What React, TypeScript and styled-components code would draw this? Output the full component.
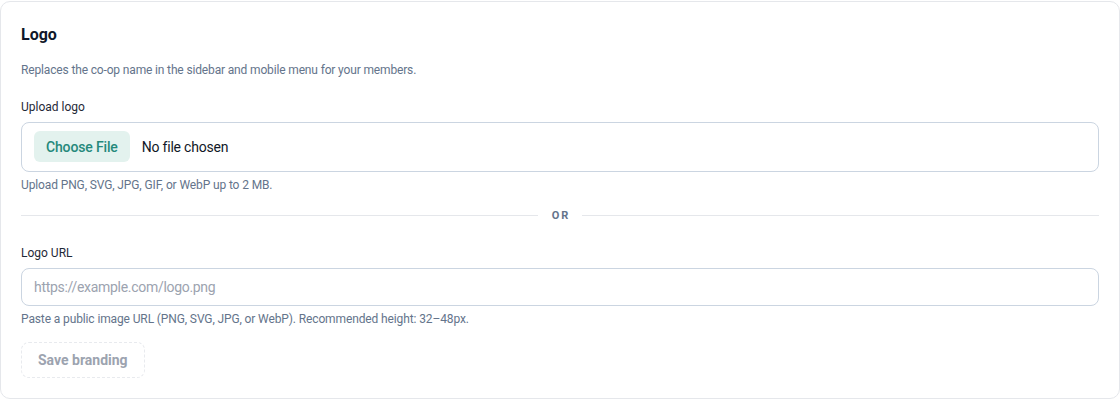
import React from "react";
import styled, { createGlobalStyle } from "styled-components";

const FONT = `Roboto, "Noto Sans", sans-serif`;

const Global = createGlobalStyle`
  * { box-sizing: border-box; }
  html, body { margin: 0; padding: 0; background: #ffffff; }
  body { font-family: ${FONT}; -webkit-font-smoothing: antialiased; }
`;

const Page = styled.div`
  padding-top: 1px;
`;

const Card = styled.section`
  width: 1120px;
  height: 398px;
  background: #ffffff;
  border: 1px solid #e5e7eb;
  border-radius: 10px;
  padding: 20px;
  display: flex;
  flex-direction: column;
`;

const Title = styled.h2`
  margin: 1px 0 0;
  font-size: 16px;
  line-height: 24px;
  font-weight: 700;
  color: #0f172a;
`;

const Description = styled.p`
  margin: 15px 0 0;
  font-size: 12px;
  line-height: 16px;
  letter-spacing: -0.15px;
  color: #64748b;
`;

const Field = styled.div<{ $top: number }>`
  margin-top: ${(p) => p.$top}px;
  display: flex;
  flex-direction: column;
`;

const Label = styled.label`
  font-size: 12px;
  line-height: 16px;
  font-weight: 400;
  color: #1f2937;
  margin-bottom: 7px;
`;

const FileInput = styled.input`
  width: 100%;
  height: 50px;
  border: 1px solid #cbd5e1;
  border-radius: 8px;
  padding: 0 12px;
  font-family: ${FONT};
  font-size: 14px;
  letter-spacing: -0.2px;
  color: #111827;
  background: #ffffff;

  &::file-selector-button {
    font-family: ${FONT};
    font-size: 14px;
    font-weight: 500;
    letter-spacing: -0.15px;
    color: #25897b;
    background: #e3f2ee;
    border: none;
    border-radius: 6px;
    height: 31px;
    padding: 0 12px;
    margin: 8px 12px 0 0;
    cursor: pointer;
  }
`;

const TextInput = styled.input`
  width: 100%;
  height: 38px;
  border: 1px solid #cbd5e1;
  border-radius: 8px;
  padding: 0 12px;
  font-family: ${FONT};
  font-size: 14px;
  letter-spacing: -0.3px;
  color: #111827;
  background: #ffffff;
  outline: none;

  &::placeholder {
    color: #9ca3af;
  }
`;

const Hint = styled.p`
  margin: 5px 0 0;
  font-size: 12px;
  line-height: 16px;
  letter-spacing: -0.12px;
  color: #64748b;
`;

const Divider = styled.div`
  margin-top: 15px;
  height: 16px;
  display: flex;
  align-items: center;
  gap: 12px;

  &::before,
  &::after {
    content: "";
    flex: 1;
    height: 1px;
    background: #e5e7eb;
  }
`;

const DividerText = styled.span`
  font-size: 11px;
  font-weight: 700;
  letter-spacing: 2px;
  color: #64748b;
  padding-left: 2px;
`;

const SaveButton = styled.button`
  margin-top: 15px;
  align-self: flex-start;
  height: 37px;
  padding: 0 16px;
  border: 1px dashed #e8eaee;
  border-radius: 8px;
  background: #ffffff;
  font-family: ${FONT};
  font-size: 14px;
  font-weight: 700;
  color: #9ca3af;
`;

export default function App() {
  return (
    <Page>
      <Global />
      <Card>
        <Title>Logo</Title>
        <Description>
          Replaces the co-op name in the sidebar and mobile menu for your members.
        </Description>
        <Field $top={21}>
          <Label htmlFor="logo-file">Upload logo</Label>
          <FileInput id="logo-file" type="file" accept="image/*" />
          <Hint>Upload PNG, SVG, JPG, GIF, or WebP up to 2 MB.</Hint>
        </Field>
        <Divider>
          <DividerText>OR</DividerText>
        </Divider>
        <Field $top={22}>
          <Label htmlFor="logo-url">Logo URL</Label>
          <TextInput id="logo-url" type="text" placeholder="https://example.com/logo.png" />
          <Hint>
            Paste a public image URL (PNG, SVG, JPG, or WebP). Recommended height: 32–48px.
          </Hint>
        </Field>
        <SaveButton disabled>Save branding</SaveButton>
      </Card>
    </Page>
  );
}
